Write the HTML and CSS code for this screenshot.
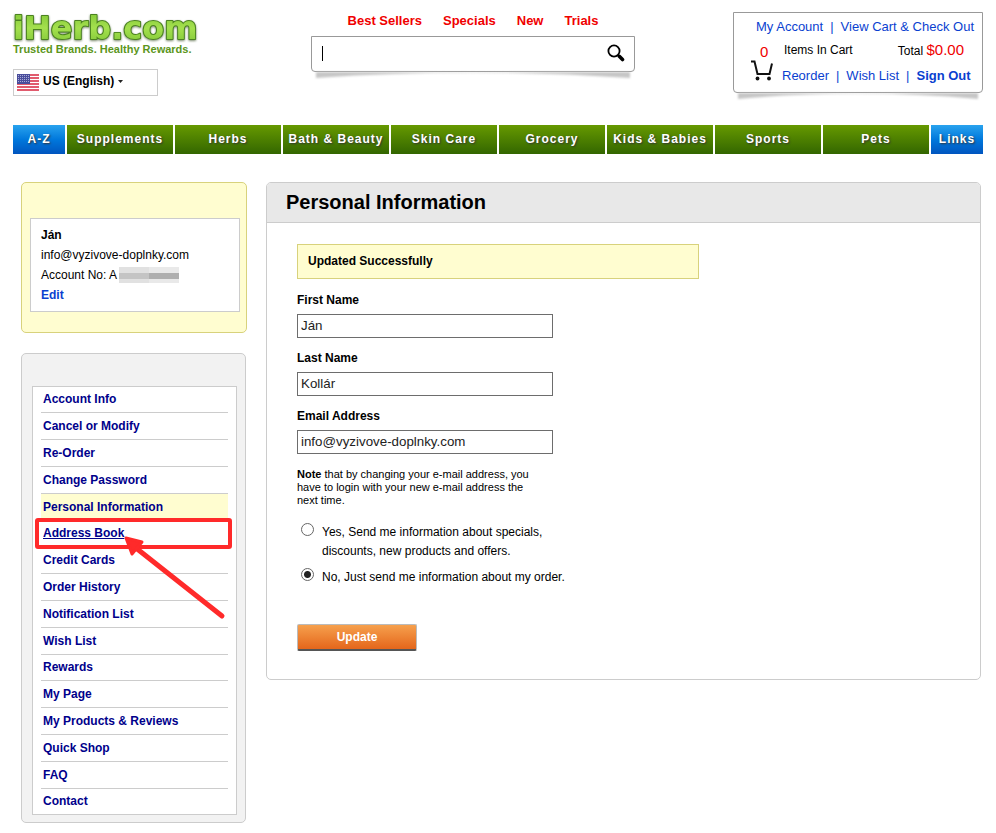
FILE: index.html
```html
<!DOCTYPE html>
<html lang="en">

<head>
    <meta charset="UTF-8">
    <meta name="viewport" content="width=device-width, initial-scale=1.0">
    <title>iHerb.com | Personal Information</title>
    <link rel="stylesheet" href="styles.css">
</head>

<body>
    <header class="header">
        <div class="brand">
            <a class="logo" href="#">
                <svg width="188" height="32" viewBox="0 0 188 32">
                    <defs>
                        <linearGradient id="leaf" x1="0" y1="0" x2="0" y2="1">
                            <stop offset="0" stop-color="#7cc433" />
                            <stop offset="0.5" stop-color="#a4e04e" />
                            <stop offset="1" stop-color="#7cc433" />
                        </linearGradient>
                    </defs>
                    <text x="0" y="27">iHerb.com</text>
                </svg>
            </a>
            <p class="tagline">Trusted Brands. Healthy Rewards.</p>
            <button class="country">
                <svg class="flag" width="22" height="17" viewBox="0 0 22 17">
                    <rect width="22" height="17" fill="#fff" />
                    <path d="M0 1h22M0 4h22M0 7h22M0 10h22M0 13h22M0 16h22" stroke="#d8263f" stroke-width="1.6" />
                    <rect width="13" height="10" fill="#4a4e9c" />
                    <path d="M1 1.5h12M1 3.5h12M1 5.5h12M1 7.5h12" stroke="#a9abd6" stroke-width="1" stroke-dasharray="1 1" />
                </svg>
                <span>US (English)</span>
                <svg width="5" height="3" viewBox="0 0 5 3"><path d="M0 0h5L2.500 3z" fill="#222" /></svg>
            </button>
        </div>
        <div class="finder">
            <nav class="promos">
                <a href="#">Best Sellers</a>
                <a href="#">Specials</a>
                <a href="#">New</a>
                <a href="#">Trials</a>
            </nav>
            <form class="search lifted">
                <span class="caret"></span>
                <input type="text" aria-label="Search">
                <button type="button" aria-label="Search">
                    <svg width="18" height="18" viewBox="0 0 18 18" fill="none" stroke="#000">
                        <circle cx="7" cy="7" r="5.600" stroke-width="1.800" />
                        <path d="M10.800 10.800L12.500 12.500" stroke-width="2" />
                        <path d="M12.300 12.300L15.500 15.500" stroke-width="3.600" stroke-linecap="round" />
                    </svg>
                </button>
                <svg class="lift" viewBox="0 0 316 10" preserveAspectRatio="none">
                    <path d="M0 0H316V6Q158 -5 0 6z" />
                </svg>
            </form>
        </div>
        <div class="account lifted">
            <div class="links top">
                <a href="#">My Account</a><span>|</span><a href="#">View Cart &amp; Check Out</a>
            </div>
            <div class="cart">
                <div class="cart-icon">
                    <span class="count">0</span>
                    <svg width="22" height="21" viewBox="0 0 22 21" fill="none" stroke="#111">
                        <path d="M0 1.500H3.500L6.500 14H18.500L21 3.500" stroke-width="2" />
                        <circle cx="6.500" cy="18.500" r="1.900" fill="#111" stroke="none" />
                        <circle cx="18" cy="18.500" r="1.900" fill="#111" stroke="none" />
                    </svg>
                </div>
                <div class="cart-info">
                    <div class="totals">
                        <span>Items In Cart</span>
                        <span>Total <span class="amount">$0.00</span></span>
                    </div>
                    <div class="links">
                        <a href="#">Reorder</a><span>|</span><a href="#">Wish List</a><span>|</span><a class="strong" href="#">Sign Out</a>
                    </div>
                </div>
            </div>
            <svg class="lift" viewBox="0 0 240 10" preserveAspectRatio="none">
                <path d="M0 0H240V6Q120 -5 0 6z" />
            </svg>
        </div>
    </header>

    <nav class="categories">
        <a class="blue" href="#">A-Z</a>
        <a href="#">Supplements</a>
        <a href="#">Herbs</a>
        <a href="#">Bath &amp; Beauty</a>
        <a href="#">Skin Care</a>
        <a href="#">Grocery</a>
        <a href="#">Kids &amp; Babies</a>
        <a href="#">Sports</a>
        <a href="#">Pets</a>
        <a class="blue" href="#">Links</a>
    </nav>

    <div class="columns">
        <aside class="sidebar">
            <section class="profile">
                <div class="inner">
                    <strong>Ján</strong>
                    <span>info@vyzivove-doplnky.com</span>
                    <span class="number">Account No: A
                        <svg width="60" height="16" viewBox="0 0 60 16" shape-rendering="crispEdges">
                            <rect width="30" height="16" fill="#e1e1e1" />
                            <rect x="30" width="30" height="16" fill="#e9e9e9" />
                            <rect y="6" width="30" height="6" fill="#c4c4c4" />
                            <rect x="30" y="6" width="30" height="6" fill="#afafaf" />
                        </svg>
                    </span>
                    <a href="#">Edit</a>
                </div>
            </section>
            <nav class="menu">
                <ul class="inner">
                    <li><a href="#">Account Info</a></li>
                    <li><a href="#">Cancel or Modify</a></li>
                    <li><a href="#">Re-Order</a></li>
                    <li><a href="#">Change Password</a></li>
                    <li class="current"><a href="#">Personal Information</a></li>
                    <li class="marked">
                        <a href="#">Address Book</a>
                        <svg class="marker" width="202" height="106" viewBox="0 0 202 106" fill="none" stroke="#ff2a2a">
                            <rect x="3" y="4" width="193" height="27" rx="1" stroke-width="4" />
                            <path d="M188 100L102 32" stroke-width="5" stroke-linecap="round" />
                            <path d="M92 22L108 26L98 38Z" fill="#ff2a2a" stroke-width="3" stroke-linejoin="round" />
                        </svg>
                    </li>
                    <li><a href="#">Credit Cards</a></li>
                    <li><a href="#">Order History</a></li>
                    <li><a href="#">Notification List</a></li>
                    <li><a href="#">Wish List</a></li>
                    <li><a href="#">Rewards</a></li>
                    <li><a href="#">My Page</a></li>
                    <li><a href="#">My Products &amp; Reviews</a></li>
                    <li><a href="#">Quick Shop</a></li>
                    <li><a href="#">FAQ</a></li>
                    <li><a href="#">Contact</a></li>
                </ul>
            </nav>
        </aside>

        <main class="panel">
            <h1>Personal Information</h1>
            <form class="details">
                <p class="message">Updated Successfully</p>
                <label for="first-name">First Name</label>
                <input type="text" id="first-name" value="Ján">
                <label for="last-name">Last Name</label>
                <input type="text" id="last-name" value="Kollár">
                <label for="email">Email Address</label>
                <input type="text" id="email" value="info@vyzivove-doplnky.com">
                <p class="note"><strong>Note</strong> that by changing your e-mail address, you have to login with your new e-mail address the next time.</p>
                <div class="option">
                    <input type="radio" name="mailing" id="mail-yes">
                    <label for="mail-yes">Yes, Send me information about specials, discounts, new products and offers.</label>
                </div>
                <div class="option">
                    <input type="radio" name="mailing" id="mail-no" checked>
                    <label for="mail-no">No, Just send me information about my order.</label>
                </div>
                <button type="button" class="update">Update</button>
            </form>
        </main>
    </div>
</body>

</html>
```

FILE: styles.css
```css
:root {
    --link-color: #0a3fd0;
    --menu-color: #00008b;
    --border-color: #ccc;
    --box-border-color: #999;
    --yellow: #fffdd0;
    --yellow-border: #d8d27c;
}

* {
    box-sizing: border-box;
}

body {
    margin: 0;
    padding: 12px 13px 10px;
    font-family: "Liberation Sans", Arial, sans-serif;
    font-size: 12px;
    color: #000;
    background-color: #fff;
}

a {
    color: var(--link-color);
    text-decoration: none;
}

p,
h1,
ul {
    margin: 0;
    padding: 0;
}

button,
label {
    font-family: inherit;
    font-size: 12px;
}

.header {
    display: grid;
    grid-template-columns: 298px minmax(0, 324px) 1fr;
    align-items: start;
    min-height: 113px;
}

.logo,
.logo svg {
    display: block;
}

.logo svg {
    overflow: visible;
}

.logo text {
    font-family: "DejaVu Sans", sans-serif;
    font-size: 32px;
    font-weight: bold;
    fill: url(#leaf);
    stroke: #4b8220;
    stroke-width: 2px;
    stroke-linejoin: round;
    paint-order: stroke;
    filter: drop-shadow(0 1px 1px #7a8a6c);
}

.tagline {
    font-size: 11px;
    font-weight: bold;
    line-height: 11px;
    color: #5c961c;
}

.country {
    display: flex;
    align-items: center;
    gap: 4px;
    width: 145px;
    height: 27px;
    margin-top: 14px;
    padding: 0 0 3px 3px;
    border: 1px solid var(--border-color);
    background: #fff;
    font-weight: bold;
    color: #000;
}

.flag {
    margin-top: 3px;
}

.promos {
    display: flex;
    justify-content: center;
    gap: 21px;
    margin-bottom: 7px;
    padding: 1px 0 0;
    font-size: 13px;
    font-weight: bold;
    line-height: 16px;
}

.promos a {
    color: #f00000;
}

.lifted {
    position: relative;
    border: 1px solid var(--box-border-color);
    border-radius: 0 0 4px 4px;
    background: #fff;
}

.lift {
    position: absolute;
    top: 100%;
    left: 4px;
    width: calc(100% - 8px);
    height: 10px;
    margin-top: 1px;
    overflow: visible;
}

.lift path {
    fill: #c6c6c6;
    filter: blur(1px);
}

.search {
    display: flex;
    align-items: center;
    height: 36px;
    padding: 0 9px 0 10px;
}

.search .caret {
    width: 1px;
    height: 15px;
    margin-bottom: 2px;
    background: #000;
}

.search input {
    flex: 1;
    min-width: 0;
    border: none;
    outline: none;
    background: transparent;
}

.search button {
    display: flex;
    padding: 0 0 2px;
    border: none;
    background: none;
}

.account {
    justify-self: end;
    width: 250px;
    padding: 4px 8px 6px 17px;
}

.links {
    display: flex;
    gap: 7px;
    font-size: 13px;
    line-height: 20px;
    color: var(--link-color);
    white-space: nowrap;
}

.links.top {
    justify-content: flex-end;
}

.strong {
    font-weight: bold;
}

.cart {
    display: flex;
    gap: 9px;
}

.cart-icon {
    width: 22px;
    padding-top: 7px;
}

.cart-icon svg {
    display: block;
}

.cart-icon .count {
    display: block;
    padding-left: 9px;
    line-height: 16px;
}

.count,
.amount {
    font-size: 15px;
    color: #f00000;
}

.cart-info {
    flex: 1;
}

.totals {
    display: flex;
    justify-content: space-between;
    height: 29px;
    padding: 3px 10px 0 2px;
    line-height: 20px;
}

.categories {
    display: grid;
    grid-template-columns: 52px repeat(8, 1fr) 52px;
    gap: 2px;
}

.categories a {
    background: linear-gradient(#669900, #336600);
    color: #fff;
    font-weight: bold;
    letter-spacing: 1px;
    line-height: 29px;
    text-align: center;
    text-shadow: 1px 1px 2px #333;
    white-space: nowrap;
}

.categories .blue {
    background: linear-gradient(#29a3ee, #0078dc 50%, #0055bf);
}

.columns {
    display: grid;
    grid-template-columns: 226px 1fr;
    gap: 19px;
    align-items: start;
    padding: 28px 2px 0 8px;
}

.profile {
    padding: 35px 6px 20px 8px;
    border: 1px solid var(--yellow-border);
    border-radius: 5px;
    background: var(--yellow);
}

.inner {
    border: 1px solid var(--border-color);
    background: #fff;
}

.profile .inner {
    display: flex;
    flex-direction: column;
    padding: 6px 10px;
    line-height: 20px;
}

.profile a {
    font-weight: bold;
}

.profile .number {
    display: flex;
    align-items: center;
    gap: 2px;
}

.menu {
    width: 225px;
    margin-top: 20px;
    padding: 32px 8px 7px 10px;
    border: 1px solid var(--border-color);
    border-radius: 5px;
    background: #f2f2f2;
}

.menu ul {
    padding: 0 8px;
    list-style: none;
}

.menu li {
    padding: 0 2px;
    border-bottom: 1px solid var(--border-color);
    line-height: 26px;
}

.menu li:nth-child(5n+1) {
    line-height: 25px;
}

.menu li:last-child {
    border-bottom: none;
}

.menu a {
    color: var(--menu-color);
    font-weight: bold;
}

.menu .current {
    background: var(--yellow);
}

.menu .marked {
    position: relative;
}

.menu .marked a {
    text-decoration: underline;
}

.marker {
    position: absolute;
    top: -5px;
    left: -7px;
    pointer-events: none;
}

.panel {
    border: 1px solid var(--border-color);
    border-radius: 5px;
}

.panel h1 {
    padding: 0 19px;
    border-bottom: 1px solid var(--border-color);
    border-radius: 4px 4px 0 0;
    background: #e8e8e8;
    font-size: 20px;
    line-height: 39px;
}

.details {
    padding: 21px 30px 28px;
}

.message {
    max-width: 402px;
    margin-bottom: 11px;
    padding: 0 10px;
    border: 1px solid var(--yellow-border);
    background: var(--yellow);
    font-weight: bold;
    line-height: 33px;
}

.details > label {
    display: block;
    font-weight: bold;
    line-height: 20px;
}

.details > input {
    display: block;
    width: 256px;
    height: 24px;
    margin: 4px 0 10px;
    padding: 0 3px 1px;
    border: 1px solid #6d6d6d;
    font-family: inherit;
    color: #222;
}

.note {
    max-width: 240px;
    margin: 14px 0 16px;
    font-size: 11px;
    line-height: 13px;
}

.option {
    display: flex;
    align-items: flex-start;
    gap: 8px;
    max-width: 290px;
    margin-bottom: 7px;
    padding-left: 4px;
    line-height: 19px;
}

.option label {
    flex: 1;
}

.option input {
    appearance: none;
    width: 13px;
    height: 13px;
    margin: 0;
    border: 1px solid #666;
    border-radius: 50%;
    background: #fff;
}

.option input:checked {
    background: radial-gradient(circle, #222 3px, #fff 4px);
}

.update {
    display: block;
    width: 120px;
    height: 27px;
    margin-top: 37px;
    padding: 0;
    border: 1px solid #bbb;
    border-bottom: 2px solid #555;
    border-radius: 2px;
    background: linear-gradient(#f6a04d, #e4661b);
    color: #fff;
    font-weight: bold;
}
```
